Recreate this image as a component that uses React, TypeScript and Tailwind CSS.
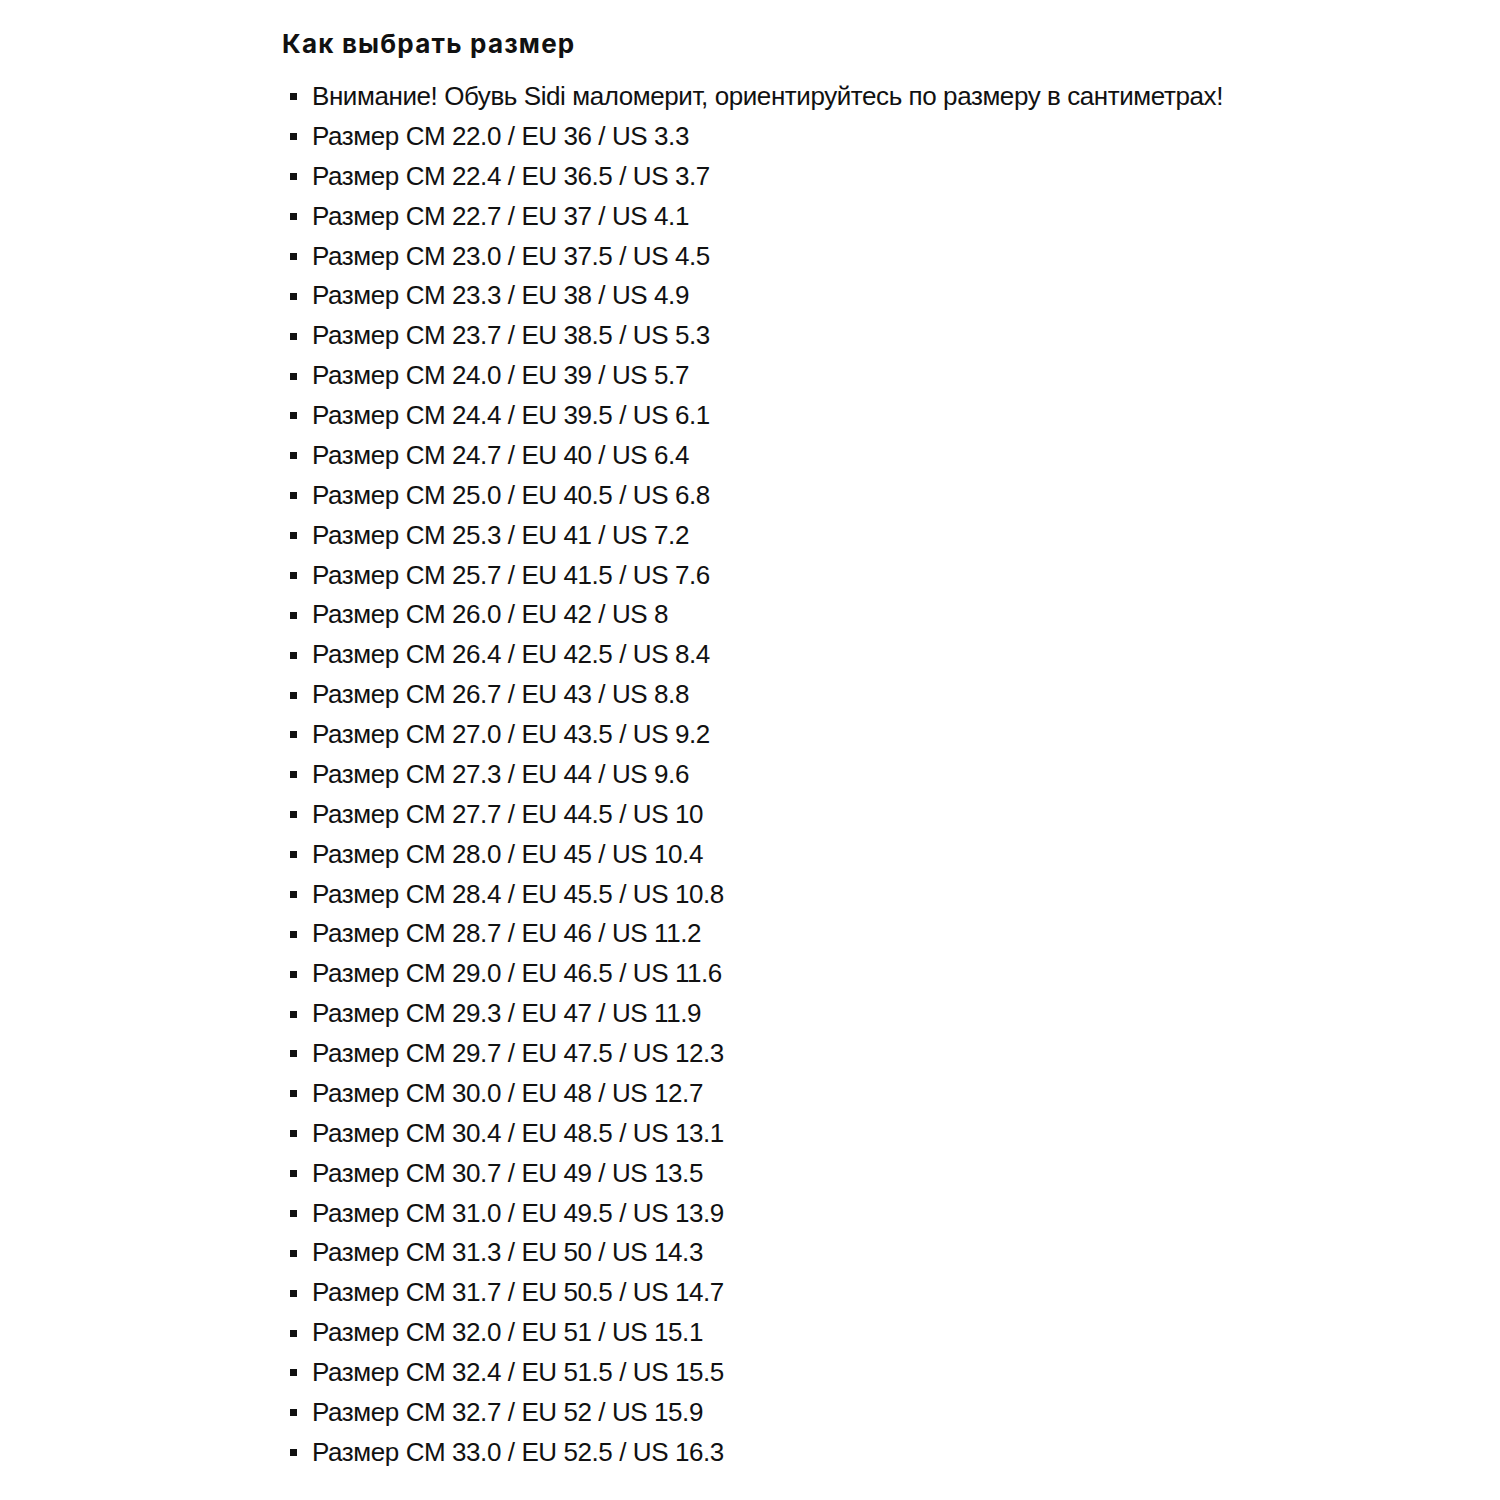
const sizes = [
  ["22.0", "36", "3.3"],
  ["22.4", "36.5", "3.7"],
  ["22.7", "37", "4.1"],
  ["23.0", "37.5", "4.5"],
  ["23.3", "38", "4.9"],
  ["23.7", "38.5", "5.3"],
  ["24.0", "39", "5.7"],
  ["24.4", "39.5", "6.1"],
  ["24.7", "40", "6.4"],
  ["25.0", "40.5", "6.8"],
  ["25.3", "41", "7.2"],
  ["25.7", "41.5", "7.6"],
  ["26.0", "42", "8"],
  ["26.4", "42.5", "8.4"],
  ["26.7", "43", "8.8"],
  ["27.0", "43.5", "9.2"],
  ["27.3", "44", "9.6"],
  ["27.7", "44.5", "10"],
  ["28.0", "45", "10.4"],
  ["28.4", "45.5", "10.8"],
  ["28.7", "46", "11.2"],
  ["29.0", "46.5", "11.6"],
  ["29.3", "47", "11.9"],
  ["29.7", "47.5", "12.3"],
  ["30.0", "48", "12.7"],
  ["30.4", "48.5", "13.1"],
  ["30.7", "49", "13.5"],
  ["31.0", "49.5", "13.9"],
  ["31.3", "50", "14.3"],
  ["31.7", "50.5", "14.7"],
  ["32.0", "51", "15.1"],
  ["32.4", "51.5", "15.5"],
  ["32.7", "52", "15.9"],
  ["33.0", "52.5", "16.3"],
];

const items = [
  "Внимание! Обувь Sidi маломерит, ориентируйтесь по размеру в сантиметрах!",
  ...sizes.map(([cm, eu, us]) => `Размер CM ${cm} / EU ${eu} / US ${us}`),
];

export default function App() {
  return (
    <div className="min-h-[1500px] w-[1500px] bg-white pl-[282px] pt-[26px] text-[#111]">
      <h2 className="text-[26px] font-bold leading-[36px] tracking-[1.2px] [font-family:Inter,'Liberation_Sans',sans-serif]">
        Как выбрать размер
      </h2>
      <ul className="mt-[15px] [font-family:'Liberation_Sans',Arial,sans-serif] text-[26px] leading-[39.88px] tracking-[-0.42px]">
        {items.map((it) => (
          <li key={it} className="flex items-center">
            <span className="ml-[8px] mr-[15px] h-[7px] w-[7px] shrink-0 bg-[#111]" />
            <span>{it}</span>
          </li>
        ))}
      </ul>
    </div>
  );
}
